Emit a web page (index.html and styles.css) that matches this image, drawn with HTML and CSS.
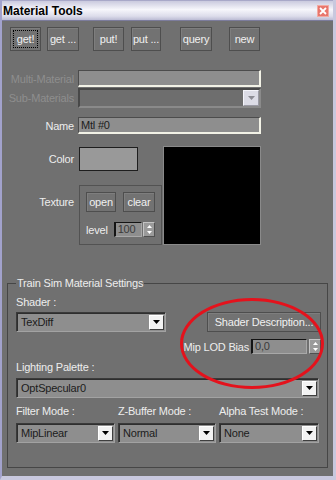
FILE: index.html
```html
<!DOCTYPE html>
<html lang="en">
  <head>
    <meta charset="UTF-8" />
    <meta name="viewport" content="width=device-width, initial-scale=1.0" />
    <title>Material Tools</title>
    <link rel="stylesheet" href="styles.css">
  </head>
  <body>
    <div class="window">
      <div class="titlebar">
        <span class="title">Material Tools</span>
        <span class="close">
          <svg width="10" height="10" viewBox="0 0 10 10"><path d="M2 2L8 8M8 2L2 8" stroke="#fff" stroke-width="1.8"/></svg>
        </span>
      </div>

      <div class="toolbar">
        <button class="btn b-get focus">get!</button>
        <button class="btn b-getm">get ...</button>
        <button class="btn b-put">put!</button>
        <button class="btn b-putm">put ...</button>
        <button class="btn b-query">query</button>
        <button class="btn b-new">new</button>
      </div>

      <div class="row mm">
        <span class="lbl dim">Multi-Material</span>
        <div class="field"></div>
      </div>
      <div class="row sub">
        <span class="lbl dim">Sub-Materials</span>
        <div class="dd-off">
          <span class="arr-off"><svg width="7" height="4" viewBox="0 0 7 4"><path d="M0 0h7L3.5 4z" fill="#8c8c94"/></svg></span>
        </div>
      </div>
      <div class="row name">
        <span class="lbl">Name</span>
        <div class="field">Mtl #0</div>
      </div>

      <div class="mid">
        <div class="mid-left">
          <div class="row color-row">
            <span class="lbl">Color</span>
            <div class="swatch"></div>
          </div>
          <div class="row tex-row">
            <span class="lbl tex-lbl">Texture</span>
            <div class="texbox">
              <div class="texbtns">
                <button class="btn sm b-open">open</button>
                <button class="btn sm b-clear">clear</button>
              </div>
              <div class="level">
                <span>level</span>
                <div class="spin-in lvl-in">100</div>
                <span class="spin"><svg width="5" height="3" viewBox="0 0 5 3"><path d="M2.5 0L5 3H0z" fill="#fff"/></svg><svg width="5" height="3" viewBox="0 0 5 3"><path d="M0 0h5L2.5 3z" fill="#fff"/></svg></span>
              </div>
            </div>
          </div>
        </div>
        <div class="black"></div>
      </div>

      <fieldset class="group">
        <legend>Train Sim Material Settings</legend>
        <div class="glbl shader-lbl">Shader :</div>
        <div class="shader-row">
          <div class="dd shader-dd">TexDiff<span class="arr"><svg width="7" height="4" viewBox="0 0 7 4"><path d="M0 0h7L3.5 4z"/></svg></span></div>
          <div class="shader-right">
            <button class="btn desc">Shader Description...</button>
            <div class="mip">
              <span>Mip LOD Bias</span>
              <div class="spin-in mip-in">0,0</div>
              <span class="spin"><svg width="5" height="3" viewBox="0 0 5 3"><path d="M2.5 0L5 3H0z" fill="#fff"/></svg><svg width="5" height="3" viewBox="0 0 5 3"><path d="M0 0h5L2.5 3z" fill="#fff"/></svg></span>
            </div>
          </div>
        </div>
        <div class="glbl light-lbl">Lighting Palette :</div>
        <div class="dd light-dd">OptSpecular0<span class="arr"><svg width="7" height="4" viewBox="0 0 7 4"><path d="M0 0h7L3.5 4z"/></svg></span></div>
        <div class="modes">
          <span class="glbl">Filter Mode :</span>
          <span class="glbl">Z-Buffer Mode :</span>
          <span class="glbl">Alpha Test Mode :</span>
          <div class="dd">MipLinear<span class="arr"><svg width="7" height="4" viewBox="0 0 7 4"><path d="M0 0h7L3.5 4z"/></svg></span></div>
          <div class="dd">Normal<span class="arr"><svg width="7" height="4" viewBox="0 0 7 4"><path d="M0 0h7L3.5 4z"/></svg></span></div>
          <div class="dd">None<span class="arr"><svg width="7" height="4" viewBox="0 0 7 4"><path d="M0 0h7L3.5 4z"/></svg></span></div>
        </div>
      </fieldset>

      <div class="ring"></div>
    </div>
  </body>
</html>
```

FILE: styles.css
```css
body {
  margin: 0;
  font-family: "Liberation Sans", Arial, sans-serif;
  font-size: 11px;
  letter-spacing: -0.2px;
}

.window {
  position: relative;
  width: 336px;
  height: 480px;
  box-sizing: border-box;
  background: #707070;
  color: #ededed;
  border-left: 2px solid #a2a2cc;
  border-right: 3px solid #c8c8de;
  border-bottom: 4px solid #c8c8de;
}

/* title bar */
.titlebar {
  height: 21px;
  box-sizing: border-box;
  border-top: 1px solid #a8a8c8;
  border-bottom: 1px solid #7c7c9c;
  background: linear-gradient(#cacade, #f6f6fb 45%, #dcdcea 80%, #bcbcd4);
  display: flex;
  align-items: center;
  justify-content: space-between;
  padding: 0 4px 0 1px;
}
.title {
  color: #000;
  font-weight: bold;
  font-size: 12px;
  letter-spacing: 0;
}
.close {
  width: 12px;
  height: 12px;
  box-sizing: border-box;
  background: #e8766c;
  border: 1px solid #f2aaa2;
  display: flex;
  align-items: center;
  justify-content: center;
}

/* buttons */
.btn {
  height: 24px;
  box-sizing: border-box;
  padding: 0;
  border: 1px solid #4e4e4e;
  background: #727272;
  box-shadow: inset 1px 1px #7e7e7e;
  color: #f0f0f0;
  font: inherit;
  letter-spacing: inherit;
}
.focus {
  outline: 1px dotted #000;
  outline-offset: -4px;
}
.toolbar {
  display: flex;
  margin: 6px 0 0 8px;
}
.b-get { width: 31px; }
.b-getm { width: 32px; margin-left: 6px; }
.b-put { width: 31px; margin-left: 14px; }
.b-putm { width: 30px; margin-left: 7px; }
.b-query { width: 32px; margin-left: 19px; }
.b-new { width: 31px; margin-left: 17px; }

/* upper form */
.row {
  display: flex;
  align-items: center;
}
.lbl {
  width: 72px;
  margin-right: 4px;
  text-align: right;
  flex-shrink: 0;
}
.dim {
  color: #8e8e8e;
}
.mm { margin-top: 19px; }
.sub { margin-top: 1px; }
.name { margin-top: 9px; }

.field {
  width: 183px;
  height: 17px;
  box-sizing: border-box;
  background: #8e8e8e;
  border-style: solid;
  border-width: 1px 2px 2px 1px;
  border-color: #4c4c4c #f2f2e6 #f2f2e6 #4c4c4c;
  color: #1c1c1c;
  padding-left: 2px;
  line-height: 14px;
}
.dd-off {
  width: 183px;
  height: 20px;
  box-sizing: border-box;
  background: #6e6e6e;
  border: 2px solid;
  border-color: #484848 #8a8a8a #8a8a8a #484848;
  display: flex;
  justify-content: flex-end;
  align-items: center;
  padding-right: 0;
}
.arr-off {
  width: 16px;
  height: 16px;
  box-sizing: border-box;
  background: #dcdce6;
  border: 1px solid;
  border-color: #f4f4fa #9a9aa4 #9a9aa4 #f4f4fa;
  display: flex;
  align-items: center;
  justify-content: center;
}

.mid {
  display: flex;
  margin-top: 12px;
}
.mid-left {
  width: 159px;
}
.color-row { margin-top: 1px; }
.swatch {
  width: 59px;
  height: 24px;
  box-sizing: border-box;
  margin-left: 1px;
  background: #999999;
  border: 1px solid #1e1e1e;
}
.tex-row {
  margin-top: 14px;
  align-items: flex-start;
}
.tex-lbl { padding-top: 11px; }
.texbox {
  margin-left: 1px;
  width: 83px;
  height: 60px;
  box-sizing: border-box;
  border: 1px solid #525252;
  padding: 6px;
}
.texbtns {
  display: flex;
  gap: 7px;
}
.sm { height: 20px; }
.b-open { width: 30px; }
.b-clear { width: 32px; }
.level {
  display: flex;
  align-items: center;
  margin-top: 10px;
}
.level span:first-child { margin-right: 6px; }

.spin-in {
  height: 15px;
  box-sizing: border-box;
  background: #8e8e8e;
  border-style: solid;
  border-width: 1px 1px 1px 2px;
  border-color: #141414 #a8a8a8 #a8a8a8 #141414;
  color: #3a3a3a;
  padding-left: 2px;
  line-height: 13px;
}
.lvl-in { width: 29px; }
.spin {
  width: 12px;
  height: 15px;
  box-sizing: border-box;
  margin-left: 1px;
  background: #9a9a9a;
  border: 1px solid;
  border-color: #c4c4c4 #505050 #505050 #c4c4c4;
  display: flex;
  flex-direction: column;
  align-items: center;
  justify-content: space-evenly;
}

.black {
  margin-left: 2px;
  width: 98px;
  height: 99px;
  box-sizing: border-box;
  background: #000;
  border: 1px solid #8a8a8a;
}

/* train sim group */
.group {
  margin: 32px 0 0 5px;
  width: 321px;
  box-sizing: border-box;
  border: 1px solid #464646;
  padding: 0 8px 24px;
}
.group legend {
  padding: 0 1px;
  line-height: 13px;
}
.glbl {
  line-height: 13px;
}
.shader-lbl { margin-top: 6px; }
.shader-row {
  display: flex;
  margin-top: 3px;
}
.shader-dd { width: 150px; }
.shader-right {
  margin-left: auto;
  margin-right: -2px;
  display: flex;
  flex-direction: column;
  align-items: flex-end;
}
.desc {
  width: 114px;
  height: 20px;
}
.mip {
  display: flex;
  align-items: center;
  margin-top: 7px;
}
.mip span:first-child { margin-right: 2px; }
.mip-in { width: 56px; }
.mip .spin { margin-left: 2px; }

.light-lbl { margin-top: 7px; }
.light-dd { margin-top: 4px; }

.dd {
  height: 20px;
  box-sizing: border-box;
  background: #8e8e8e;
  border: 1px solid;
  border-color: #3a3a3a #a2a2a2 #a2a2a2 #3a3a3a;
  box-shadow: inset 1px 1px #2e2e2e;
  color: #1c1c1c;
  display: flex;
  align-items: center;
  padding-left: 4px;
}
.arr {
  margin-left: auto;
  margin-right: 1px;
  width: 15px;
  height: 15px;
  box-sizing: border-box;
  background: #f2f2f2;
  border: 1px solid;
  border-color: #ffffff #3e3e3e #3e3e3e #ffffff;
  display: flex;
  align-items: center;
  justify-content: center;
}

.modes {
  display: grid;
  grid-template-columns: 99px 98px 100px;
  justify-content: space-between;
  row-gap: 5px;
  margin-top: 7px;
}

/* red marker drawn over the dialog */
.ring {
  position: absolute;
  left: 178px;
  top: 298px;
  width: 144px;
  height: 91px;
  box-sizing: border-box;
  border: 3px solid #e4121c;
  border-radius: 50%;
}
```
